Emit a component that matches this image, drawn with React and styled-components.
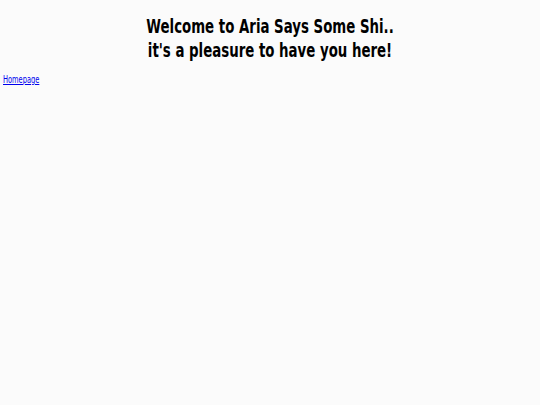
import React from 'react'
import styled, { createGlobalStyle } from 'styled-components'

const GlobalStyle = createGlobalStyle`
  html, body {
    margin: 0;
    padding: 0;
    background: #fbfbfb;
    overflow: hidden;
  }
`;

// the page is drawn narrower than it is tall
const Page = styled.div`
  width: 810px;
  padding: 15px 4.5px;
  box-sizing: border-box;
  transform: scaleX(0.6667);
  transform-origin: 0 0;
  font-family: "DejaVu Sans", sans-serif;
`;

const Title = styled.h1`
  margin: 0;
  text-align: center;
  font-weight: 700;
  font-size: 20px;
  line-height: 23.5px;
  color: #000;
`;

const Nav = styled.nav`
  margin-top: 12px;
  font-size: 10px;
`;

const NavLink = styled.a`
  color: #0000ee;
  text-decoration: underline;
`;

const App = () => {
  return (
    <>
      <GlobalStyle />
      <Page>
        <Title>
          Welcome to Aria Says Some Shi..
          <br />
          it's a pleasure to have you here!
        </Title>
        <Nav>
          <NavLink href="#">Homepage</NavLink>
        </Nav>
      </Page>
    </>
  )
}

export default App;
